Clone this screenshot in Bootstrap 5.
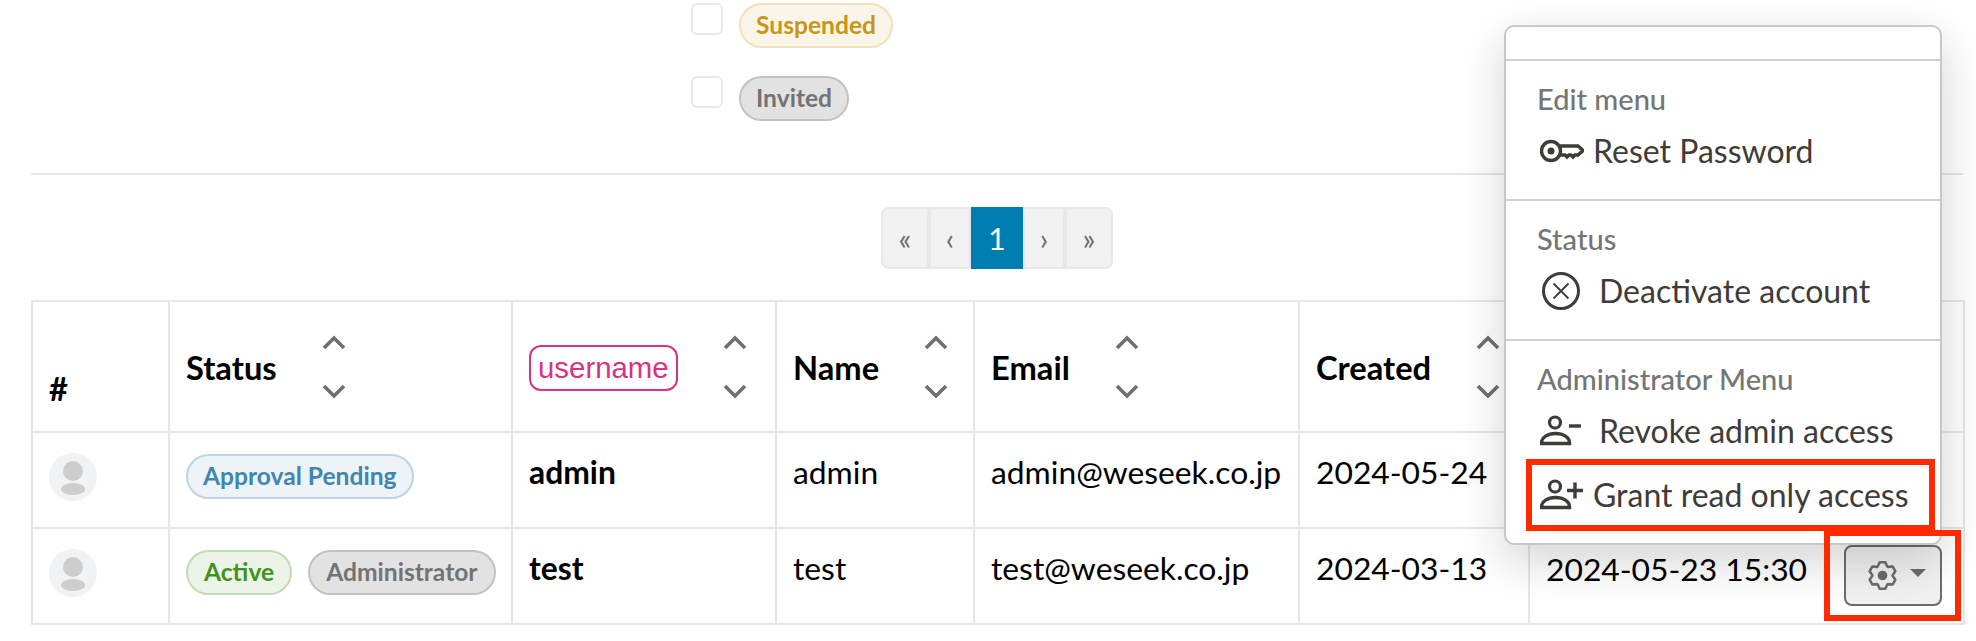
<!DOCTYPE html>
<html lang="en">
<head>
  <meta charset="UTF-8">
  <title>User management</title>
  <link href="https://cdn.jsdelivr.net/npm/bootstrap@5.3.2/dist/css/bootstrap.min.css" rel="stylesheet">
  <style>
    body {
      background-color: #fff;
      font-family: Lato, sans-serif;
      font-size: 31.8px;
      color: #000;
      height: 641px;
      overflow: hidden;
    }
    .page-wrap {
      position: relative;
      padding: 0 13px 0 31px;
      height: 641px;
    }
    .filter-box {
      margin-left: 660px;
      padding-top: 3px;
    }
    .filter-row {
      display: flex;
      gap: 16px;
      height: 73px;
    }
    .fake-check {
      width: 32px;
      height: 32px;
      border: 2px solid #e9e9e9;
      border-radius: 6px;
      background: #fff;
    }
    .st-pill {
      display: inline-block;
      height: 45px;
      line-height: 40px;
      padding: 0 15px;
      border-radius: 23px;
      border: 2px solid;
      font-size: 24.6px;
      font-weight: 700;
    }
    .pill-wide { padding: 0 16px; }
    .st-suspended { color: #c89617; background: #fbf5e9; border-color: #f2e0b9; }
    .st-gray { color: #737373; background: #e2e2e2; border-color: #c2c2c2; }
    .st-pending { color: #4186ad; background: #edf3f7; border-color: #bdd5e3; }
    .st-active { color: #43921c; background: #ecf4e8; border-color: #c3dcb6; }
    .top-line {
      margin: 24px 0 32px;
      border-top: 2px solid #e6e6e6;
      opacity: 1;
    }
    .pager-list { margin-bottom: 31px; }
    .pager-list .page-link {
      height: 62px;
      line-height: 58px;
      padding: 0;
      text-align: center;
      color: #6f6f6f;
      background: #f1f1f1;
      border: 2px solid #e8e8e8;
      font-size: 30px;
    }
    .pager-list .page-item:not(:first-child) .page-link { margin-left: 0; }
    .pager-list .page-item:first-child .page-link { border-radius: 8px 0 0 8px; }
    .pager-list .page-item:last-child .page-link { border-radius: 0 8px 8px 0; }
    .pager-list .page-item.active .page-link {
      background: #007db0;
      border-color: #007db0;
      color: #fff;
    }
    .pg-end { width: 48px; }
    .pg-side { width: 42px; }
    .pg-cur { width: 52px; }
    .user-table {
      table-layout: fixed;
      width: 1932px;
      margin: 0;
      color: #000;
      border-color: #e6e6e6;
    }
    .user-table > :not(caption) > * > * {
      border: 2px solid #e6e6e6;
      padding: 0 16px;
      color: #000;
      box-shadow: none;
    }
    .user-table thead tr { height: 131px; }
    .user-table tbody tr { height: 96px; }
    .user-table tbody td { vertical-align: middle; padding-bottom: 14px; }
    .user-table tbody td.pill-cell { padding-bottom: 7px; }
    .user-table tbody td.btn-cell { padding-bottom: 0; }
    .user-table thead th { vertical-align: middle; font-weight: 700; font-size: 32.7px; }
    .user-table thead th.num-col { vertical-align: bottom; padding-bottom: 18px; }
    .th-wrap { display: flex; align-items: center; gap: 45px; margin-top: 2px; }
    .sort-icons { display: flex; flex-direction: column; gap: 34px; margin-bottom: 2px; }
    .sort-icons svg { display: block; }
    .name-code {
      font-family: "Liberation Sans", Arial, sans-serif;
      font-size: 29.4px;
      font-weight: 400;
      line-height: 42px;
      color: #d63384;
      border: 2px solid #d63384;
      border-radius: 12px;
      padding: 0 7px;
      display: inline-block;
    }
    .ava-round {
      display: block;
      width: 48px;
      height: 48px;
    }
    .last-cell { display: flex; align-items: center; justify-content: space-between; height: 92px; margin-right: 5px; }
    .last-time { margin-bottom: 13px; }
    .gear-btn {
      width: 98px;
      height: 61px;
      margin-left: auto;
      margin-bottom: 2px;
      padding: 0 0 0 6px;
      display: flex;
      align-items: center;
      justify-content: center;
      gap: 12px;
      background: #f1f1f1;
      border: 2px solid #6c6c6c;
      border-radius: 8px;
    }
    .gear-caret {
      width: 0;
      height: 0;
      margin-bottom: 4px;
      border-left: 8px solid transparent;
      border-right: 8px solid transparent;
      border-top: 8px solid #6c6c6c;
    }
    .menu-box.dropdown-menu {
      top: 25px;
      right: 34px;
      width: 438px;
      height: 520px;
      padding: 0;
      font-size: 32px;
      border: 2px solid #c8c8c8;
      border-radius: 10px;
      box-shadow: 0 16px 48px rgba(0,0,0,.175);
    }
    .menu-top { height: 32px; }
    .menu-box .dropdown-divider { margin: 0; border-top: 2px solid #cfcfcf; opacity: 1; }
    .menu-sec { height: 138px; padding-top: 17px; }
    .menu-box .dropdown-header {
      padding: 0 31px;
      color: #757575;
      font-size: 29px;
      line-height: 41px;
    }
    .menu-box .dropdown-item {
      display: flex;
      align-items: center;
      padding: 0 0 0 34px;
      height: 64px;
      color: #3f3b38;
      font-size: 32px;
    }
    .menu-ico { flex: none; display: block; }
    .ico-gap-s { margin-right: 9px; }
    .ico-gap-l { margin-right: 15px; }
    .red-mark {
      position: absolute;
      z-index: 1010;
      border: 6px solid #ff2a00;
      pointer-events: none;
    }
    .mark-item { left: 1526px; top: 459px; width: 409px; height: 72px; }
    .mark-btn { left: 1824px; top: 530px; width: 137px; height: 91px; }
    #c1 { width: 137px; } #c2 { width: 343px; } #c3 { width: 264px; } #c4 { width: 198px; }
    #c5 { width: 325px; } #c6 { width: 230px; } #c7 { width: 435px; }
  </style>
</head>
<body>
<div class="page-wrap">
  <div class="filter-box">
    <div class="filter-row">
      <div class="fake-check"></div>
      <span class="st-pill st-suspended">Suspended</span>
    </div>
    <div class="filter-row">
      <div class="fake-check"></div>
      <span class="st-pill st-gray">Invited</span>
    </div>
  </div>

  <hr class="top-line">

  <nav>
    <ul class="pagination justify-content-center pager-list">
      <li class="page-item"><a class="page-link pg-end" href="#">«</a></li>
      <li class="page-item"><a class="page-link pg-side" href="#">‹</a></li>
      <li class="page-item active"><a class="page-link pg-cur" href="#">1</a></li>
      <li class="page-item"><a class="page-link pg-side" href="#">›</a></li>
      <li class="page-item"><a class="page-link pg-end" href="#">»</a></li>
    </ul>
  </nav>

  <table class="table user-table">
    <colgroup>
      <col id="c1"><col id="c2"><col id="c3"><col id="c4"><col id="c5"><col id="c6"><col id="c7">
    </colgroup>
    <thead>
      <tr>
        <th class="num-col">#</th>
        <th><div class="th-wrap">Status <span class="sort-icons"><svg width="24" height="15" viewBox="0 0 24 15"><path d="M2 13 12 3l10 10" fill="none" stroke="#6f6f6f" stroke-width="3.6"/></svg><svg width="24" height="15" viewBox="0 0 24 15"><path d="M2 2l10 10L22 2" fill="none" stroke="#6f6f6f" stroke-width="3.6"/></svg></span></div></th>
        <th><div class="th-wrap"><code class="name-code">username</code> <span class="sort-icons"><svg width="24" height="15" viewBox="0 0 24 15"><path d="M2 13 12 3l10 10" fill="none" stroke="#6f6f6f" stroke-width="3.6"/></svg><svg width="24" height="15" viewBox="0 0 24 15"><path d="M2 2l10 10L22 2" fill="none" stroke="#6f6f6f" stroke-width="3.6"/></svg></span></div></th>
        <th><div class="th-wrap">Name <span class="sort-icons"><svg width="24" height="15" viewBox="0 0 24 15"><path d="M2 13 12 3l10 10" fill="none" stroke="#6f6f6f" stroke-width="3.6"/></svg><svg width="24" height="15" viewBox="0 0 24 15"><path d="M2 2l10 10L22 2" fill="none" stroke="#6f6f6f" stroke-width="3.6"/></svg></span></div></th>
        <th><div class="th-wrap">Email <span class="sort-icons"><svg width="24" height="15" viewBox="0 0 24 15"><path d="M2 13 12 3l10 10" fill="none" stroke="#6f6f6f" stroke-width="3.6"/></svg><svg width="24" height="15" viewBox="0 0 24 15"><path d="M2 2l10 10L22 2" fill="none" stroke="#6f6f6f" stroke-width="3.6"/></svg></span></div></th>
        <th><div class="th-wrap">Created <span class="sort-icons"><svg width="24" height="15" viewBox="0 0 24 15"><path d="M2 13 12 3l10 10" fill="none" stroke="#6f6f6f" stroke-width="3.6"/></svg><svg width="24" height="15" viewBox="0 0 24 15"><path d="M2 2l10 10L22 2" fill="none" stroke="#6f6f6f" stroke-width="3.6"/></svg></span></div></th>
        <th></th>
      </tr>
    </thead>
    <tbody>
      <tr>
        <td class="pill-cell"><svg class="ava-round" viewBox="0 0 48 48"><circle cx="24" cy="24" r="24" fill="#f1f2f5"/><circle cx="24" cy="18" r="10" fill="#cdcdcd"/><ellipse cx="24" cy="36" rx="12" ry="6" fill="#cdcdcd"/></svg></td>
        <td class="pill-cell"><div class="d-flex gap-3"><span class="st-pill st-pending">Approval Pending</span></div></td>
        <td class="fw-bold">admin</td>
        <td>admin</td>
        <td>admin@weseek.co.jp</td>
        <td>2024-05-24</td>
        <td class="btn-cell"><div class="last-cell"><button type="button" class="gear-btn"></button></div></td>
      </tr>
      <tr>
        <td class="pill-cell"><svg class="ava-round" viewBox="0 0 48 48"><circle cx="24" cy="24" r="24" fill="#f1f2f5"/><circle cx="24" cy="18" r="10" fill="#cdcdcd"/><ellipse cx="24" cy="36" rx="12" ry="6" fill="#cdcdcd"/></svg></td>
        <td class="pill-cell"><div class="d-flex gap-3"><span class="st-pill pill-wide st-active">Active</span><span class="st-pill pill-wide st-gray">Administrator</span></div></td>
        <td class="fw-bold">test</td>
        <td>test</td>
        <td>test@weseek.co.jp</td>
        <td>2024-03-13</td>
        <td class="btn-cell"><div class="last-cell"><span class="last-time">2024-05-23 15:30</span>
          <button type="button" class="gear-btn">
            <svg width="31" height="31" viewBox="-1 -1 32 32"><path d="M12.09 1.31H17.91L19.93 5.73 20.56 6.10 25.40 5.63 28.31 10.67 25.49 14.63V15.37L28.31 19.33 25.40 24.37 20.56 23.90 19.93 24.27 17.91 28.69H12.09L10.07 24.27 9.44 23.90 4.60 24.37 1.69 19.33 4.51 15.37V14.63L1.69 10.67 4.60 5.63 9.44 6.10 10.07 5.73Z" fill="none" stroke="#6c6c6c" stroke-width="2.6" stroke-linejoin="round"/><circle cx="15" cy="15" r="5" fill="#6c6c6c"/></svg>
            <span class="gear-caret"></span>
          </button></div></td>
      </tr>
    </tbody>
  </table>

  <div class="dropdown-menu show menu-box">
    <div class="menu-top"></div>
    <hr class="dropdown-divider">
    <div class="menu-sec">
      <h6 class="dropdown-header">Edit menu</h6>
      <a class="dropdown-item" href="#"><svg class="menu-ico ico-gap-s" width="44" height="24" viewBox="0 0 44 24"><circle cx="11" cy="12" r="9.500" fill="none" stroke="#3f3b38" stroke-width="3.400"/><circle cx="11" cy="12" r="3.500" fill="#3f3b38"/><path d="M20 7h18l5 4.500-5 4.500h-3l-2 2-2-2h-2l-2 2-2-2h-5" fill="none" stroke="#3f3b38" stroke-width="3.400"/></svg>Reset Password</a>
    </div>
    <hr class="dropdown-divider">
    <div class="menu-sec">
      <h6 class="dropdown-header">Status</h6>
      <a class="dropdown-item" href="#"><svg class="menu-ico ico-gap-l" width="44" height="40" viewBox="0 0 44 40"><circle cx="21" cy="20" r="17.500" fill="none" stroke="#3f3b38" stroke-width="3"/><path d="M13.500 12.500l15 15M28.500 12.500l-15 15" stroke="#3f3b38" stroke-width="1.800"/></svg>Deactivate account</a>
    </div>
    <hr class="dropdown-divider">
    <div class="menu-sec">
      <h6 class="dropdown-header">Administrator Menu</h6>
      <a class="dropdown-item" href="#"><svg class="menu-ico ico-gap-l" width="44" height="32" viewBox="0 0 44 32"><circle cx="15" cy="7.500" r="5.500" fill="none" stroke="#3f3b38" stroke-width="3.200"/><path d="M1.500 28.500v-1c0-5 6-9 14-9s14 4 14 9v1z" fill="none" stroke="#3f3b38" stroke-width="3.400"/><path d="M29 11h12" stroke="#3f3b38" stroke-width="3.400"/></svg>Revoke admin access</a>
      <a class="dropdown-item" href="#"><svg class="menu-ico ico-gap-s" width="44" height="32" viewBox="0 0 44 32"><circle cx="15" cy="7.500" r="5.500" fill="none" stroke="#3f3b38" stroke-width="3.200"/><path d="M1.500 28.500v-1c0-5 6-9 14-9s14 4 14 9v1z" fill="none" stroke="#3f3b38" stroke-width="3.400"/><path d="M27 11.500h16M35 3.500v16" stroke="#3f3b38" stroke-width="3.400"/></svg>Grant read only access</a>
    </div>
  </div>

  <div class="red-mark mark-item"></div>
  <div class="red-mark mark-btn"></div>
</div>
<script src="https://cdn.jsdelivr.net/npm/bootstrap@5.3.2/dist/js/bootstrap.bundle.min.js"></script>
</body>
</html>
